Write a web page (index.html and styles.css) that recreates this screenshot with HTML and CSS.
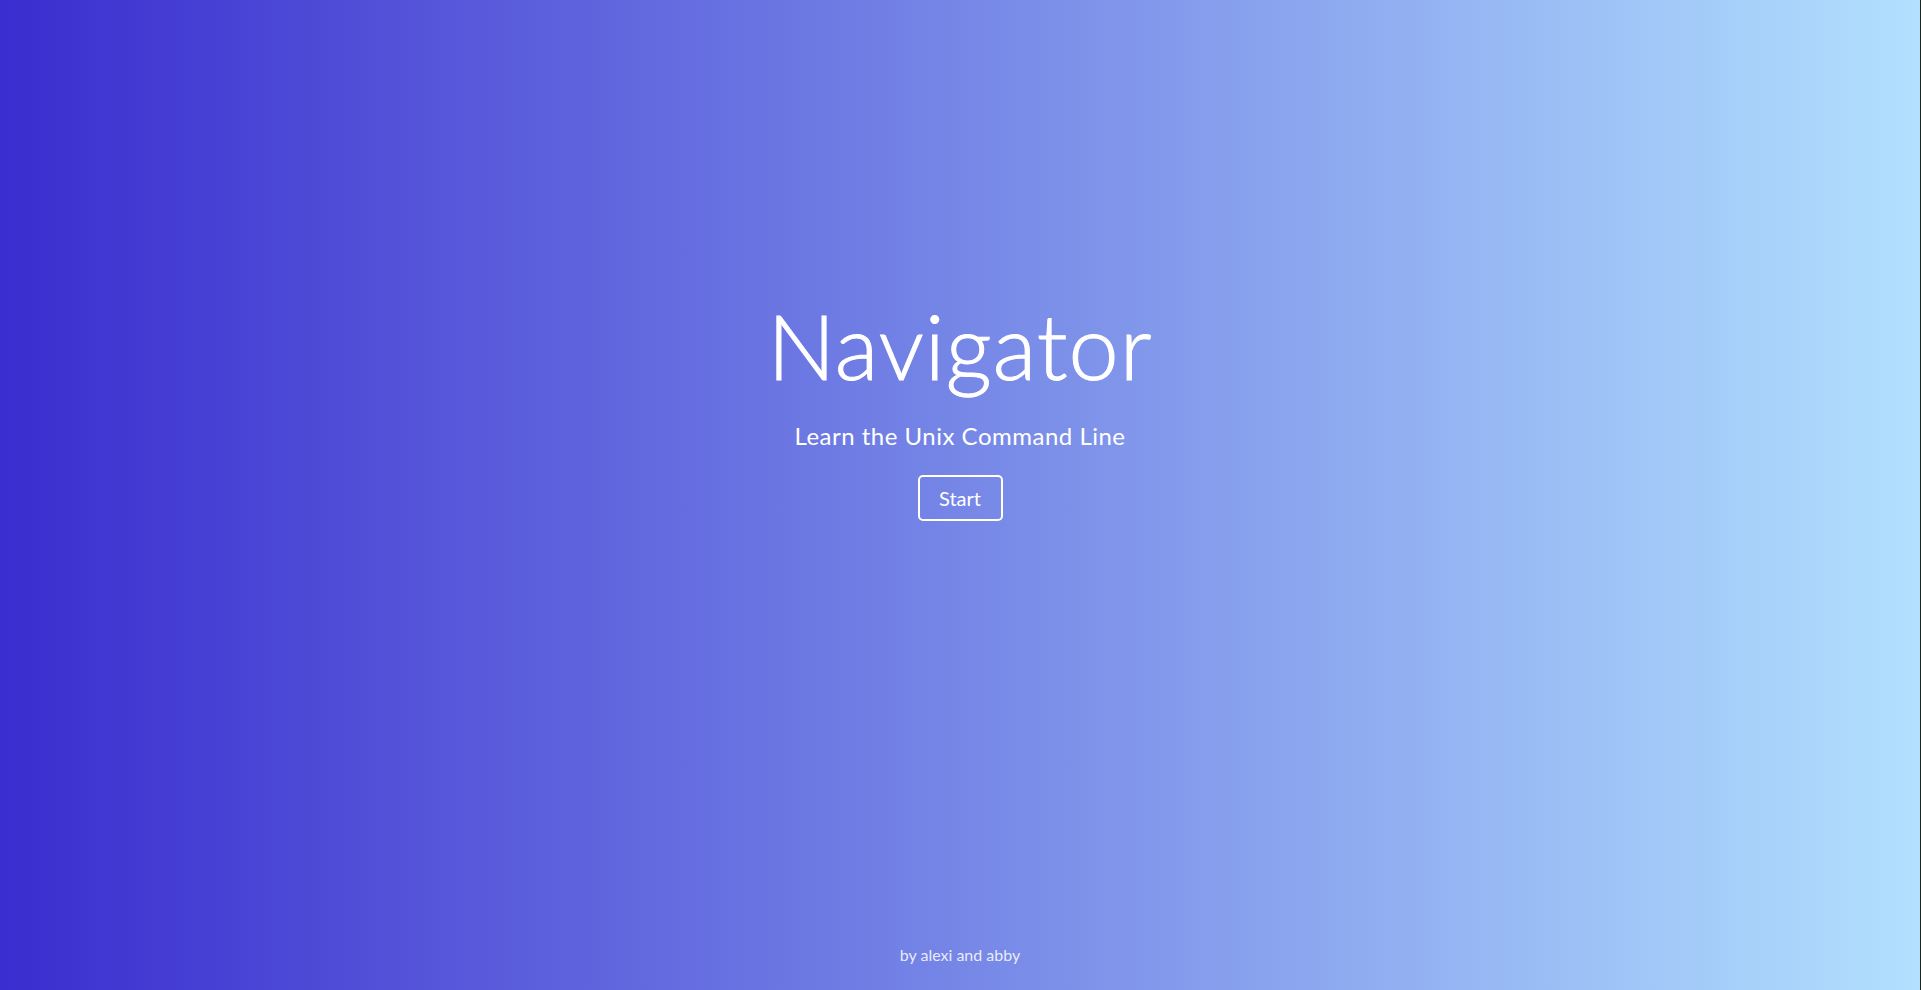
FILE: index.html
```html
<!DOCTYPE html>
<html lang="en">
<head>
<meta charset="utf-8">
<title>Navigator</title>
<link rel="stylesheet" href="styles.css">
</head>
<body>
<div class="page">
  <main class="hero">
    <h1 class="title">Navigator</h1>
    <p class="subtitle">Learn the Unix Command Line</p>
    <button class="start">Start</button>
  </main>
  <footer class="credit">by alexi and abby</footer>
</div>
</body>
</html>
```
FILE: styles.css
```css
html {
  background: #1f2418;
}
body {
  margin: 0;
  font-family: "Lato", "Open Sans", sans-serif;
  color: #ffffff;
}
.page {
  width: 1920px;
  height: 990px;
  display: flex;
  flex-direction: column;
  align-items: center;
  background: linear-gradient(to right, #3a2dcf, #b2e0fe);
}
.hero {
  display: flex;
  flex-direction: column;
  align-items: center;
  padding-top: 300px;
}
.title {
  margin: 0;
  font-size: 90px;
  font-weight: 300;
  line-height: 1;
  letter-spacing: 1px;
  -webkit-text-stroke: 1px #ffffff;
}
.subtitle {
  margin: 34px 0 0;
  font-size: 24px;
  font-weight: 400;
  line-height: 1;
  letter-spacing: 0.5px;
}
.start {
  margin-top: 27px;
  width: 85px;
  height: 46px;
  background: transparent;
  border: 2px solid #ffffff;
  border-radius: 5px;
  color: #ffffff;
  font-family: inherit;
  font-size: 20px;
  font-weight: 400;
  padding: 0;
}
.credit {
  margin-top: auto;
  padding-bottom: 27px;
  font-size: 16px;
  font-weight: 400;
  color: rgba(255, 255, 255, 0.85);
  line-height: 1;
}
```
